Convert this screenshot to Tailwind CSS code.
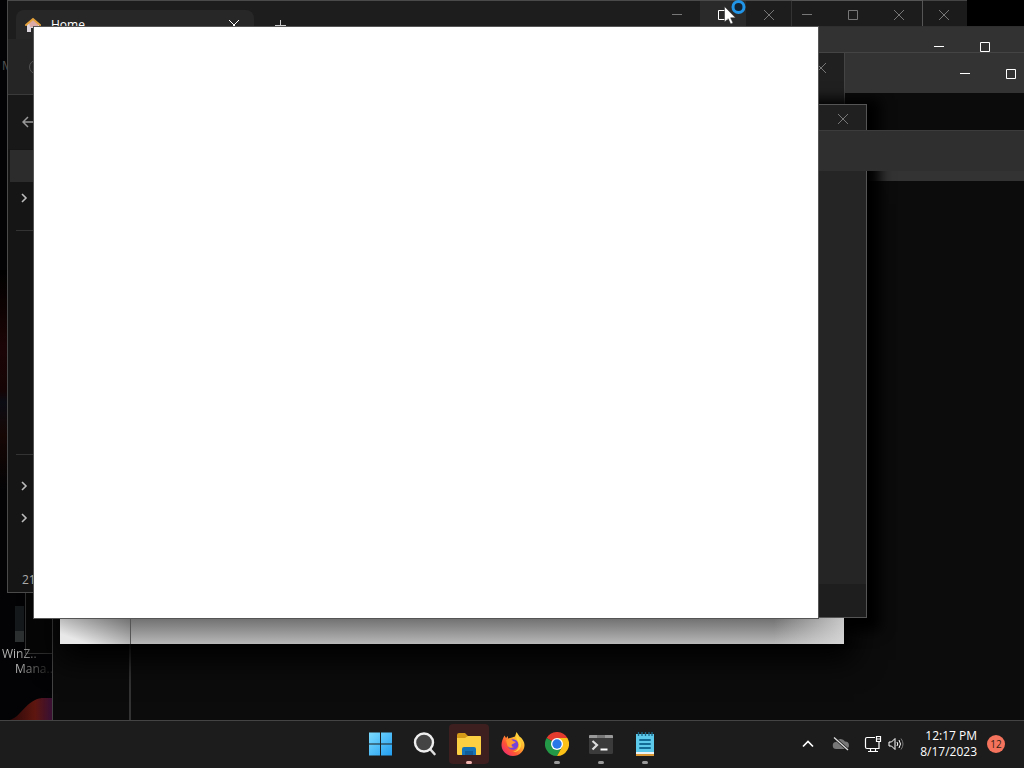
<!DOCTYPE html>
<html lang="en">
<head>
    <meta charset="UTF-8">
    <meta name="viewport" content="width=device-width, initial-scale=1.0">
    <title>Desktop</title>
    <script src="https://cdn.jsdelivr.net/npm/@tailwindcss/browser@4"></script>
</head>
<body class="h-screen flex flex-col overflow-hidden bg-black text-white text-xs font-['Open_Sans','Noto_Sans',sans-serif]">

    <!-- Shared glyphs -->
    <svg class="hidden">
        <symbol id="min" viewBox="0 0 12 12"><path d="M1 5.500h10" fill="none" stroke="currentColor"/></symbol>
        <symbol id="max" viewBox="0 0 12 12"><path d="M1.500 1.500h9v9h-9z" fill="none" stroke="currentColor"/></symbol>
        <symbol id="close" viewBox="0 0 12 12"><path d="M1 1l10 10M11 1L1 11" fill="none" stroke="currentColor"/></symbol>
        <symbol id="chevron" viewBox="0 0 12 12"><path d="M4 2l4 4-4 4" fill="none" stroke="currentColor" stroke-width="1.600"/></symbol>
    </svg>

    <!-- Desktop -->
    <main class="relative flex-1 overflow-hidden bg-black">

        <!-- Wallpaper -->
        <div class="absolute inset-y-0 left-0 w-[60px] bg-[#030305]">
            <svg class="size-full" viewBox="0 0 60 720" preserveAspectRatio="none">
                <defs>
                    <linearGradient id="petal" x1="0" x2="1"><stop offset="0" stop-color="#2a0808"/><stop offset=".5" stop-color="#5e160f"/><stop offset=".8" stop-color="#3c1030"/></linearGradient>
                    <linearGradient id="glow" x1="0" y1="0" x2="0" y2="1"><stop offset="0" stop-color="#000"/><stop offset=".35" stop-color="#1c0506"/><stop offset=".55" stop-color="#150405"/><stop offset=".6" stop-color="#0b0c14"/><stop offset=".75" stop-color="#160704"/><stop offset="1" stop-color="#030305"/></linearGradient>
                </defs>
                <path d="M0 270h8v220H0z" fill="url(#glow)"/>
                <path d="M10 720C22 716 26 700 42 698h18v22z" fill="url(#petal)"/>
                <path d="M15 606h9v36h-9z" fill="#15191b"/>
                <path d="M15 631h9v11h-9z" fill="#2c3031"/>
            </svg>
        </div>
        <span class="absolute left-[2px] top-[58px] text-[#555]">M</span>

        <!-- Windows behind, far right -->
        <section class="absolute left-[183px] top-0 w-[784px] h-[500px] flex justify-end bg-[#1b1b1b] border-t border-[#444] text-[#777]">
            <button aria-label="Close" class="w-[46px] h-[28px] grid place-items-center"><svg class="size-3"><use href="#close"/></svg></button>
        </section>
        <section class="absolute left-[139px] top-0 w-[784px] h-[500px] flex justify-end bg-[#1c1c1c] border-t border-r border-[#555] text-[#777]">
            <button aria-label="Minimize" class="w-[46px] h-[28px] grid place-items-center"><svg class="size-3"><use href="#min"/></svg></button>
            <button aria-label="Maximize" class="w-[46px] h-[28px] grid place-items-center"><svg class="size-3"><use href="#max"/></svg></button>
            <button aria-label="Close" class="w-[46px] h-[28px] grid place-items-center"><svg class="size-3"><use href="#close"/></svg></button>
        </section>

        <!-- Consoles -->
        <section class="absolute left-[25px] top-[26px] w-[1030px] h-[628px] bg-[#060606] border border-[#2e2e2e]">
            <header class="flex justify-end h-[40px] bg-[#323232]">
                <button aria-label="Minimize" class="w-[46px] grid place-items-center"><svg class="size-3"><use href="#min"/></svg></button>
                <button aria-label="Maximize" class="w-[46px] grid place-items-center"><svg class="size-3"><use href="#max"/></svg></button>
                <button aria-label="Close" class="w-[46px] grid place-items-center"><svg class="size-3"><use href="#close"/></svg></button>
            </header>
        </section>
        <section class="absolute left-[52px] top-[52px] w-[1029px] h-[700px] bg-[#0b0b0b] border border-[#444]">
            <header class="flex justify-end h-[40px] bg-[#333]">
                <button aria-label="Minimize" class="w-[46px] grid place-items-center"><svg class="size-3"><use href="#min"/></svg></button>
                <button aria-label="Maximize" class="w-[46px] grid place-items-center"><svg class="size-3"><use href="#max"/></svg></button>
                <button aria-label="Close" class="w-[46px] grid place-items-center"><svg class="size-3"><use href="#close"/></svg></button>
            </header>
        </section>
        <!-- Icon label, fading out under the console shadow -->
        <div class="absolute left-[2px] top-[646px] leading-[15px] bg-linear-to-r from-[#bbb] from-30% to-[#222] to-90% bg-clip-text text-transparent">
            <p>WinZ..</p>
            <p class="pl-[13px]">Mana..</p>
        </div>
        <section class="absolute left-[61px] top-[52px] w-[784px] h-[300px] flex justify-end bg-[#202020] border-t border-r border-[#444] text-[#777]">
            <button aria-label="Close" class="w-[46px] h-[30px] grid place-items-center"><svg class="size-3"><use href="#close"/></svg></button>
        </section>
        <section class="absolute left-[129px] top-[130px] w-[1028px] h-[640px] bg-[#0c0c0c] border-l-2 border-[#333]">
            <header class="h-[51px] bg-[#333]"></header>
        </section>

        <!-- Blank window and dark window under the front one -->
        <section class="absolute left-[60px] top-[200px] w-[784px] h-[444px] bg-[#dcdcdc] shadow-[4px_10px_28px_6px_black]"></section>
        <section class="absolute left-[83px] top-[104px] w-[784px] h-[514px] flex flex-col bg-[#252525] border border-[#555] text-[#777] shadow-[4px_4px_12px_9px_black]">
            <header class="flex justify-end h-[28px] bg-[#202020]">
                <button aria-label="Close" class="w-[46px] grid place-items-center"><svg class="size-3"><use href="#close"/></svg></button>
            </header>
            <div class="flex-1"></div>
            <footer class="h-[33px] bg-[#1e1e1e]"></footer>
        </section>
        <div class="absolute left-[156px] right-0 top-[130px] h-[41px] bg-[#2f2f2f] border-t border-[#3c3c3c]"></div>
        <!-- Console title bar above the dark window's shadow -->
        <div class="absolute left-[845px] right-0 top-[54px] h-[39px] bg-[#333]"></div>
        <div class="absolute right-0 top-[54px] w-[83px] h-[39px] flex justify-between pl-[18px] pr-[7px]">
            <button aria-label="Minimize" class="grid place-items-center"><svg class="size-3"><use href="#min"/></svg></button>
            <button aria-label="Maximize" class="grid place-items-center"><svg class="size-3"><use href="#max"/></svg></button>
        </div>

        <!-- Shaded lower edge of the blank window -->
        <div class="absolute left-[60px] top-[618px] w-[784px] h-[26px] flex bg-linear-to-b from-[#707070] to-[#b8b8b8]">
            <div class="w-[70px] bg-linear-to-tr from-[#e8e8e8] from-20% to-[#707070]"></div>
            <div class="w-px bg-[#555]"></div>
            <div class="ml-auto w-[70px] bg-linear-to-r from-[#ddd]/0 to-[#ddd]/80"></div>
        </div>

        <!-- File explorer -->
        <section class="absolute left-[7px] top-0 w-[785px] h-[593px] flex flex-col bg-[#151515] border border-r-0 border-[#4a4a4a]">
            <header class="flex h-[38px] bg-[#1d1d1d]">
                <div class="mt-[9px] ml-[8px] w-[238px] flex items-center gap-[10px] pl-[9px] pr-[14px] rounded-t-lg bg-[#272727]">
                    <svg class="size-4" viewBox="0 0 16 16">
                        <path d="M2 7l6-5 6 5v8h-4v-4H6v4H2z" fill="#ddd5dc"/>
                        <path d="M4 6l4-3 5 4v3H5z" fill="#dba9a6"/>
                        <path d="M1 8l7-6 7 6" fill="none" stroke="#e5a13a" stroke-width="2" stroke-linecap="round"/>
                    </svg>
                    <span class="flex-1">Home</span>
                    <button aria-label="Close tab"><svg class="size-3"><use href="#close"/></svg></button>
                </div>
                <button aria-label="New tab" class="w-[52px] mt-[9px] grid place-items-center"><svg class="size-3" viewBox="0 0 12 12"><path d="M1 6.500h11M6.500 1v11" stroke="#ccc"/></svg></button>
                <div class="ml-auto flex h-[28px] text-[#777]">
                    <button aria-label="Minimize" class="w-[46px] grid place-items-center"><svg class="size-3"><use href="#min"/></svg></button>
                    <button aria-label="Maximize" class="w-[46px] grid place-items-center bg-[#2a2a2a] text-white"><svg class="size-3"><use href="#max"/></svg></button>
                    <button aria-label="Close" class="w-[46px] grid place-items-center border-r border-[#333]"><svg class="size-3"><use href="#close"/></svg></button>
                </div>
            </header>
            <div class="flex items-center h-[56px] pl-[20px] bg-[#252525] border-b border-[#3a3a3a]">
                <svg class="size-4" viewBox="0 0 16 16"><circle cx="8" cy="8" r="6.500" fill="none" stroke="#555"/></svg>
            </div>
            <div class="flex items-center h-[54px] pl-[14px] bg-[#181818]">
                <button aria-label="Back"><svg class="size-3" viewBox="0 0 12 12"><path d="M6 1L1 6l5 5M1 6h11" fill="none" stroke="#999" stroke-width="1.500"/></svg></button>
            </div>
            <nav class="flex-1 flex flex-col w-[200px] text-[#bbb]">
                <div class="ml-[2px] mt-px h-[32px] bg-[#2b2c2b]"></div>
                <button aria-label="Expand" class="h-[32px] pl-[10px]"><svg class="size-3"><use href="#chevron"/></svg></button>
                <hr class="ml-[8px] mt-[16px] border-[#333]">
                <hr class="ml-[8px] mt-[223px] border-[#333]">
                <button aria-label="Expand" class="mt-[15px] h-[32px] pl-[10px]"><svg class="size-3"><use href="#chevron"/></svg></button>
                <button aria-label="Expand" class="h-[32px] pl-[10px]"><svg class="size-3"><use href="#chevron"/></svg></button>
            </nav>
            <footer class="h-[24px] pl-[14px] text-[#aaa] leading-6">21 items</footer>
        </section>

        <!-- Front window, still blank -->
        <section class="absolute left-[33px] top-[26px] w-[786px] h-[593px] bg-white border border-[#555]"></section>

        <!-- Pointer with busy ring -->
        <svg class="absolute left-[722px] top-0 w-[26px] h-[28px]" viewBox="0 0 26 28">
            <circle cx="16.500" cy="7" r="5.500" fill="#123" stroke="#2196e8" stroke-width="3"/>
            <path d="M2.500 6.500v15.500l3.700-3.300 2.500 5.300 2.300-1-2.400-5.200h4.900z" fill="#fff" stroke="#222" stroke-width=".5"/>
        </svg>
    </main>

    <!-- Taskbar -->
    <footer class="grid grid-cols-[1fr_auto_1fr] items-center h-12 shrink-0 pb-px bg-[#1c1c1c] border-t border-[#444]">
        <div></div>
        <nav class="flex items-center gap-1 pl-[2px]">
            <button aria-label="Start" class="size-10 grid place-items-center">
                <svg class="size-6" viewBox="0 0 24 24">
                    <defs><linearGradient id="win" x1="0" y1="0" x2="24" y2="24" gradientUnits="userSpaceOnUse"><stop stop-color="#7ddcff"/><stop offset="1" stop-color="#1f9cf0"/></linearGradient></defs>
                    <path d="M0 .5h11v11H0zM12 .5h11v11H12zM0 12.500h11v11H0zM12 12.500h11v11H12z" fill="url(#win)"/>
                </svg>
            </button>
            <button aria-label="Search" class="size-10 grid place-items-center">
                <svg class="size-6" viewBox="0 0 24 24"><path d="M17 17l4.500 5" stroke="#ddd" stroke-width="2.600" stroke-linecap="round"/><circle cx="11" cy="10.500" r="9" fill="#444" stroke="#eee" stroke-width="2.400"/></svg>
            </button>
            <button aria-label="File Explorer" class="relative size-10 grid place-items-center rounded bg-[#3d1f20]">
                <svg class="size-6" viewBox="0 0 24 24">
                    <path d="M0 3q0-2 2-2h6l3 3h11q2 0 2 2v3H0z" fill="#d69a18"/>
                    <path d="M0 6h8l3-2h12q1 0 1 1v17q0 1-1 1H1q-1 0-1-1z" fill="#fccf43"/>
                    <path d="M5 23v-6q0-2 2-2h10q2 0 2 2v6z" fill="#1673b8"/><path d="M8 19h8v4H8z" fill="#125d99"/>
                </svg>
                <span class="absolute bottom-0 w-[6px] h-[3px] rounded bg-[#f2b5b0]"></span>
            </button>
            <button aria-label="Firefox" class="size-10 grid place-items-center">
                <svg class="size-6" viewBox="0 0 24 24">
                    <defs><linearGradient id="fox" x1="1" y1="0" x2="0" y2="1"><stop stop-color="#fff44f"/><stop offset=".35" stop-color="#ffb52e"/><stop offset=".65" stop-color="#ff5634"/><stop offset="1" stop-color="#e5188a"/></linearGradient></defs>
                    <path d="M3.500 3.500L5 6l2-2v2.500l4-1 3-1 1.500-4.500 3 4.500 1 1V5c2 2 4 5 4 8a11.500 11 0 0 1-23 0c0-3 1-6 3-9.500z" fill="url(#fox)"/>
                    <circle cx="12" cy="12.500" r="5.300" fill="#7542d9"/>
                    <path d="M5 8c3-2 6-1 7 1l3 1-3 2c-2 0-2 3 1 3-3 2-7 0-7-3z" fill="#ff982e"/>
                    <path d="M16 2c0 4 5 6 4 12-1 4-4 6-8 6 4-1 6-4 6-7 0-4-4-6-2-11z" fill="#ffd83d"/>
                </svg>
            </button>
            <button aria-label="Chrome" class="relative size-10 grid place-items-center">
                <svg class="size-6" viewBox="0 0 24 24">
                    <path d="M12 12L1.600 6A12 12 0 0 1 22.400 6z" fill="#e33b2e"/>
                    <path d="M12 12L1.600 6A12 12 0 0 0 12 24l5-9z" fill="#239847"/>
                    <path d="M12 24A12 12 0 0 0 22.400 6H12l5 9z" fill="#fbc116"/>
                    <circle cx="12" cy="12" r="6" fill="#fff"/><circle cx="12" cy="12" r="4.700" fill="#2878e8"/>
                </svg>
                <span class="absolute bottom-0 w-[6px] h-[3px] rounded bg-[#999]"></span>
            </button>
            <button aria-label="Terminal" class="relative size-10 grid place-items-center">
                <svg class="size-6" viewBox="0 0 24 24">
                    <rect y="3" width="24" height="19" rx="1.500" fill="#3b3b3b"/><path d="M0 6V4q0-1 1-1h22q1 0 1 1v2z" fill="#999"/><path d="M8 3h8v3H8z" fill="#777"/>
                    <path d="M3.500 9l4.500 4-4.500 4.500" fill="none" stroke="#ddd" stroke-width="2.200"/><path d="M11.500 17.500h7" stroke="#fff" stroke-width="2"/>
                </svg>
                <span class="absolute bottom-0 w-[6px] h-[3px] rounded bg-[#999]"></span>
            </button>
            <button aria-label="Notepad" class="relative size-10 grid place-items-center">
                <svg class="size-6" viewBox="0 0 24 24">
                    <path d="M3 20h18v4H3z" fill="#d99632"/><path d="M3 2h18v20H3z" fill="#5cc9ea"/><path d="M3 20h18v2H3z" fill="#e8f2f4"/>
                    <path d="M5.500 0v4M9 0v4M12.500 0v4M16 0v4M19 0v4" stroke="#1a6687" stroke-width="1.300"/>
                    <path d="M7 8h10M7 12h10M7 16h10" stroke="#126b94" stroke-width="2" stroke-linecap="round"/>
                </svg>
                <span class="absolute bottom-0 w-[6px] h-[3px] rounded bg-[#999]"></span>
            </button>
        </nav>
        <div class="flex items-center justify-end pr-[19px]">
            <button aria-label="Show hidden icons" class="mr-[18px]"><svg class="size-3" viewBox="0 0 12 12"><path d="M1 8.500l5-5 5 5" fill="none" stroke="#fff" stroke-width="1.700"/></svg></button>
            <button aria-label="OneDrive" class="mr-[14px]">
                <svg class="size-[18px]" viewBox="0 0 18 18"><path d="M4.500 14a3.500 3.500 0 0 1-.5-7 5 5 0 0 1 9-.5 3.800 3.800 0 0 1 1 7.500z" fill="#777"/><path d="M2 2.500l14 12.500" stroke="#1c1c1c" stroke-width="3"/><path d="M2 2.500l14 12.500" stroke="#ddd" stroke-width="1.300"/></svg>
            </button>
            <button aria-label="Network" class="mr-[6px]">
                <svg class="size-[18px]" viewBox="0 0 18 18" fill="none" stroke="#fff"><path d="M11 2.500H3q-1.500 0-1.500 1.500v8q0 1.500 1.500 1.500h12V7M12.500 1.500h4v5h-4zM12.500 4h4M6.500 13.500v3M11.500 13.500v3M4 16.500h10" stroke-width="1.200"/></svg>
            </button>
            <button aria-label="Volume" class="mr-[16px]">
                <svg class="size-4" viewBox="0 0 16 16" fill="none" stroke="#fff"><path d="M1 6h2.500L7 2.500v11L3.500 10H1zM9 6q1.500 2 0 4M11 4q3 4 0 8"/><path d="M13 2.500q4 5.500 0 11" stroke="#777"/></svg>
            </button>
            <button class="mr-[10px] text-right text-xs leading-4"><span class="block">12:17 PM</span><span class="block">8/17/2023</span></button>
            <button aria-label="12 notifications" class="size-[18px] rounded-full bg-[#f4735c] text-[10px] leading-[18px] text-[#321]">12</button>
        </div>
    </footer>
</body>
</html>
